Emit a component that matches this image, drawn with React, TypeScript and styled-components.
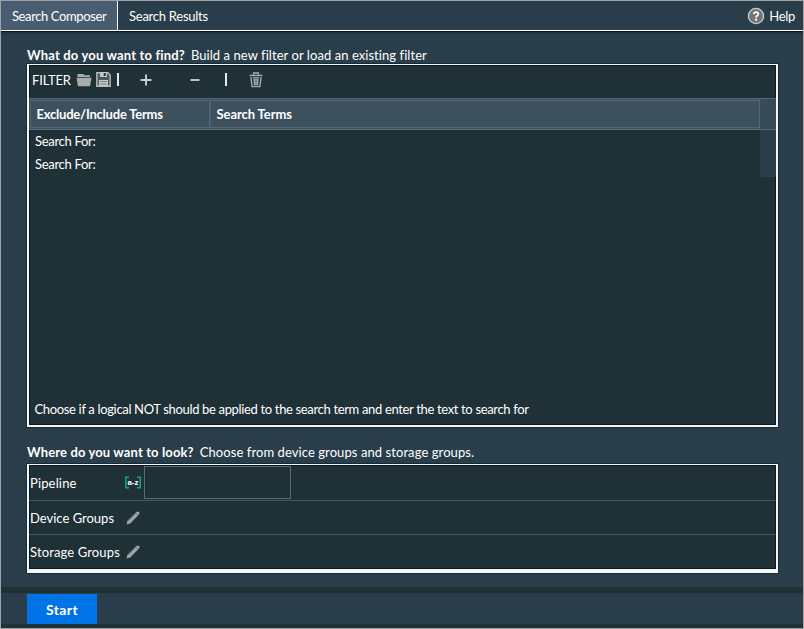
import React from "react";
import styled, { createGlobalStyle } from "styled-components";

const Global = createGlobalStyle`
  * { box-sizing: border-box; }
  body { margin: 0; background: #293d4a; overflow: hidden; }
`;

const Window = styled.div`
  width: 804px;
  height: 629px;
  display: flex;
  flex-direction: column;
  background: #293d4a;
  border: 1px solid #a0a3a3;
  color: #fff;
  font: 13px/18px Lato, "Open Sans", sans-serif;
`;

const Label = styled.span<{ $spacing?: number; $bold?: boolean }>`
  white-space: nowrap;
  letter-spacing: ${(p) => p.$spacing ?? 0}px;
  font-weight: ${(p) => (p.$bold ? 700 : 400)};
`;

const TabBar = styled.header`
  height: 30px;
  flex: none;
  display: flex;
  border-bottom: 1px solid #fff;
  box-shadow: 0 1px 0 #06141b, 0 3px 0 #213640;
`;

const Tab = styled.div<{ $active?: boolean }>`
  height: 29px;
  padding: 6px 11px 0;
  width: ${(p) => (p.$active ? "117px" : "auto")};
  background: ${(p) => (p.$active ? "#485e70" : "transparent")};
  border-right: ${(p) => (p.$active ? "1px solid #fff" : "none")};
`;

const Help = styled.div`
  margin-left: auto;
  display: flex;
  gap: 4px;
  padding: 6px 8px 0 0;
`;

const Heading = styled.div<{ $top: number; $height: number }>`
  margin: ${(p) => p.$top}px 0 0 26px;
  height: ${(p) => p.$height}px;
  flex: none;
  display: flex;
  gap: 6px;
`;

const Panel = styled.section<{ $height: number; $bottom: number }>`
  margin: 0 0 0 26px;
  width: 751px;
  height: ${(p) => p.$height}px;
  flex: none;
  display: flex;
  flex-direction: column;
  background: #1f3037;
  border: 2px solid #f4f5f5;
  border-top-width: 1px;
  border-bottom-width: ${(p) => p.$bottom}px;
  box-shadow: 0 0 0 1px #162b36, inset 0 0 0 1px #0c171c;
`;

const Toolbar = styled.div`
  height: 33px;
  flex: none;
  display: flex;
  align-items: center;
  padding: 0 0 4px 3px;
`;

const IconSlot = styled.span<{ $gap: number }>`
  display: flex;
  margin-left: ${(p) => p.$gap}px;
`;

const Divider = styled.i<{ $gap: number }>`
  width: 2px;
  height: 13px;
  margin-left: ${(p) => p.$gap}px;
  background: #e6e9e9;
`;

const Table = styled.div`
  flex: 1;
  display: grid;
  grid-template: 32px 1fr / 731px 16px;
`;

const HeaderRow = styled.div`
  display: grid;
  grid-template-columns: 180px 1fr;
  padding: 1px 0 1px 1px;
  background: #3c505e;
  border-top: 1px solid #53697a;
  border-bottom: 1px solid #586d7c;
`;

const HeaderCell = styled.div`
  padding: 4px 6px 0 5.5px;
  border: 1px solid #536776;
  border-left-color: #4a5f6e;
`;

const HeaderEnd = styled.div`
  background: #364a58;
  border-top: 1px solid #53697a;
  border-bottom: 1px solid #586d7c;
`;

const Body = styled.div`
  display: flex;
  flex-direction: column;
  padding: 2px 0 0 6px;
`;

const TermRow = styled.div`
  height: 23px;
`;

const Hint = styled.div`
  margin: auto 0 7px -0.5px;
  height: 18px;
`;

const ScrollThumb = styled.div`
  width: 16px;
  height: 47px;
  background: #293d4a;
`;

const FieldRow = styled.div<{ $height: number }>`
  height: ${(p) => p.$height}px;
  flex: none;
  display: grid;
  grid-template-columns: 95px 19px 1fr;
  align-items: center;
  padding-left: 1px;
  & + & { border-top: 1px solid #40566a; }
`;

const Input = styled.input`
  width: 147px;
  height: 33px;
  background: #1f3037;
  border: 1px solid #566a78;
  outline: none;
  color: #fff;
`;

const Footer = styled.footer`
  margin-top: auto;
  height: 41px;
  flex: none;
  border-top: 6px solid #1f3037;
  border-bottom: 4px solid #1f3037;
  padding: 1px 0 0 26px;
`;

const StartButton = styled.button`
  display: block;
  width: 70px;
  height: 30px;
  padding: 0;
  border: 0;
  background: #0073e7;
  color: #fff;
  font: 700 14px Lato, sans-serif;
  letter-spacing: 0.4px;
`;

const HelpIcon = () => (
  <svg width="18" height="18" viewBox="0 0 18 18">
    <circle cx="9" cy="9" r="7.6" fill="#737579" stroke="#c9cccd" strokeWidth="1.4" />
    <path d="M6.8 7.2Q7 5.1 9.1 5.1Q11.4 5.1 11.3 7Q11.2 8.1 10.1 8.8Q9.1 9.4 9.1 10.5" fill="none" stroke="#fff" strokeWidth="1.8" />
    <rect x="8.1" y="11.7" width="2" height="2" fill="#fff" />
  </svg>
);

const FolderIcon = () => (
  <svg width="16" height="14" viewBox="0 0 16 14" fill="#a9acac">
    <path d="M1.5 4V1H7L8.5 2.2H14V4Z" />
    <path d="M.5 4.8H15.5L14 13.2H2Z" />
  </svg>
);

const SaveIcon = () => (
  <svg width="15" height="15" viewBox="0 0 15 15">
    <path d="M.8.8H12L14.2 3V14.2H.8Z" fill="#4d585d" stroke="#b7baba" strokeWidth="1.4" />
    <rect x="4" y="0" width="7" height="5" fill="#c4c8c8" />
    <rect x="7.7" y="1" width="2" height="3" fill="#26363d" />
    <path d="M3 8H12V14H3Z" fill="#c4c8c8" />
    <path d="M4 9.5H11M4 12H11" stroke="#667176" strokeWidth=".8" />
  </svg>
);

const SignIcon = ({ plus }: { plus?: boolean }) => (
  <svg width="12" height="12" viewBox="0 0 12 12" stroke="#c9cdce" strokeWidth="1.9">
    <path d={plus ? "M.5 6H11.5M6 .5V11.5" : "M1.5 6H10.5"} />
  </svg>
);

const TrashIcon = () => (
  <svg width="14" height="16" viewBox="0 0 14 16" fill="none" stroke="#a4a8aa">
    <path d="M.5 3.5H13.5M4.5 3V1H9.5V3" strokeWidth="1.3" />
    <path d="M2 5L3 14.5H11L12 5M5 5L5.5 13M9 5L8.5 13M7 5V13" strokeWidth="1.4" />
  </svg>
);

const RangeIcon = () => (
  <svg width="16" height="14" viewBox="0 0 16 14">
    <path d="M4 1.2H.8V11.8H4M12 1.2H15.2V11.8H12" fill="none" stroke="#10a985" strokeWidth="1.5" />
    <text x="8" y="8.7" fill="#fff" textAnchor="middle" fontFamily="Liberation Sans" fontSize="8" fontWeight="700">a-z</text>
  </svg>
);

const PencilIcon = () => (
  <svg width="15" height="14" viewBox="-1 0 15 14">
    <path d="M.5 13.5L1.5 9.8L10.4.9Q12 0 13.1 1.2Q14 2.3 13 3.5L4.2 12.4Z" fill="#a2a5a6" />
    <path d="M2.3 10L10 2.3L12 4.2" fill="none" stroke="#666e72" strokeWidth=".8" />
  </svg>
);

export default function App() {
  return (
    <Window>
      <Global />
      <TabBar>
        <Tab $active><Label $spacing={-0.39}>Search Composer</Label></Tab>
        <Tab><Label $spacing={-0.25}>Search Results</Label></Tab>
        <Help><HelpIcon /><Label $spacing={-0.3}>Help</Label></Help>
      </TabBar>

      <Heading $top={15} $height={18}>
        <Label $bold $spacing={0.17}>What do you want to find?</Label>
        <Label $spacing={0.06}>Build a new filter or load an existing filter</Label>
      </Heading>
      <Panel $height={363} $bottom={2}>
        <Toolbar>
          <Label $spacing={-0.16}>FILTER</Label>
          <IconSlot $gap={5}><FolderIcon /></IconSlot>
          <IconSlot $gap={4}><SaveIcon /></IconSlot>
          <Divider $gap={6} />
          <IconSlot $gap={21}><SignIcon plus /></IconSlot>
          <IconSlot $gap={37}><SignIcon /></IconSlot>
          <Divider $gap={24} />
          <IconSlot $gap={22}><TrashIcon /></IconSlot>
        </Toolbar>
        <Table>
          <HeaderRow>
            <HeaderCell><Label $bold $spacing={-0.22}>Exclude/Include Terms</Label></HeaderCell>
            <HeaderCell><Label $bold $spacing={-0.08}>Search Terms</Label></HeaderCell>
          </HeaderRow>
          <HeaderEnd />
          <Body>
            <TermRow><Label $spacing={-0.3}>Search For:</Label></TermRow>
            <TermRow><Label $spacing={-0.3}>Search For:</Label></TermRow>
            <Hint><Label $spacing={-0.34}>Choose if a logical NOT should be applied to the search term and enter the text to search for</Label></Hint>
          </Body>
          <ScrollThumb />
        </Table>
      </Panel>

      <Heading $top={16} $height={21}>
        <Label $bold $spacing={0.13}>Where do you want to look?</Label>
        <Label $spacing={0.08}>Choose from device groups and storage groups.</Label>
      </Heading>
      <Panel $height={109} $bottom={4}>
        <FieldRow $height={35}><Label $spacing={0.15}>Pipeline</Label><RangeIcon /><Input aria-label="Pipeline" /></FieldRow>
        <FieldRow $height={34}><Label>Device Groups</Label><PencilIcon /></FieldRow>
        <FieldRow $height={35}><Label $spacing={0.13}>Storage Groups</Label><PencilIcon /></FieldRow>
      </Panel>
      <Footer><StartButton>Start</StartButton></Footer>
    </Window>
  );
}
